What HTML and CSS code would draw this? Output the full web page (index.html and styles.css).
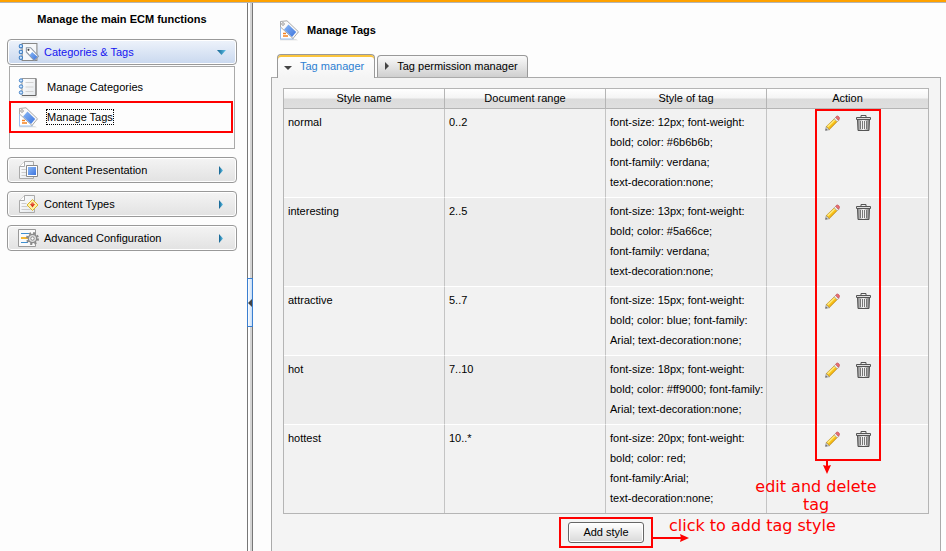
FILE: index.html
```
<!DOCTYPE html>
<html lang="en">
<head>
<meta charset="utf-8">
<title>Manage Tags</title>
<link rel="stylesheet" href="styles.css">
</head>
<body>
<svg class="defs" aria-hidden="true">
  <defs>
    <linearGradient id="blue" x1="0" y1="0" x2="1" y2="1"><stop offset="0" stop-color="#8ab8f5"/><stop offset="1" stop-color="#3d74dd"/></linearGradient>
    <linearGradient id="metal" x1="0" y1="0" x2="1" y2="0"><stop offset="0" stop-color="#8a8a8a"/><stop offset=".5" stop-color="#f4f4f4"/><stop offset="1" stop-color="#777"/></linearGradient>
    <linearGradient id="paper" x1="0" y1="0" x2="1" y2="1"><stop offset="0" stop-color="#fff"/><stop offset="1" stop-color="#e4e8ec"/></linearGradient>
    <linearGradient id="arrow" x1="0" y1="0" x2="1" y2="0"><stop offset="0" stop-color="#12608f"/><stop offset="1" stop-color="#5fc4ea"/></linearGradient>
  </defs>
  <symbol id="i-tag" viewBox="0 0 21 21">
    <path d="M1 20.200h18l-2-1H1z" fill="#d5d5d5"/>
    <path d="M1.500 1.500v17.500h13L10 10z" fill="#fff" stroke="#9cbfee"/>
    <path d="M4 13.500h3M4 16h5" stroke="#f58220" stroke-width="1.300"/>
    <path d="M1.500 1.500 8 .8l11.500 11-5.500 6.700L1.500 7z" fill="#fafafa" stroke="#a8a8a8"/>
    <path d="m9.500 4.500 7.700 7.500-4.200 5-8-7.500z" fill="url(#blue)"/>
    <circle cx="4" cy="4" r="1.300" fill="#fff" stroke="#888" stroke-width=".8"/>
  </symbol>
  <symbol id="i-notebook" viewBox="0 0 20 21">
    <path d="M2 20h17" stroke="#ddd"/>
    <path d="M3.500 1.500h14v17h-14z" fill="url(#paper)" stroke="#999"/>
    <path d="M17.500 1.500v17h-14" fill="none" stroke="#666"/>
    <path d="M7 5.500h8M7 10h8M7 14.500h8" stroke="#d2d2d2"/>
    <g fill="#cfe6ff" stroke="#3f7fc5"><circle cx="2.500" cy="3.500" r="1.700"/><circle cx="2.500" cy="9.500" r="1.700"/><circle cx="2.500" cy="15.500" r="1.700"/></g>
  </symbol>
  <symbol id="i-cattag" viewBox="0 0 20 18">
    <path d="M3.500.5h14v16h-14z" fill="#f5f7fa" stroke="#888"/>
    <g fill="#cfe6ff" stroke="#3f7fc5"><circle cx="2.300" cy="3" r="1.600"/><circle cx="2.300" cy="8.500" r="1.600"/><circle cx="2.300" cy="14" r="1.600"/></g>
    <path d="M7.500 4.500h4l7.500 8-4 4-7.500-8z" fill="#fff" stroke="#8b96a5"/>
    <path d="m13 8.500 5 4.500-3 3-4.500-4.500z" fill="url(#blue)"/>
    <circle cx="9.500" cy="6.500" r="1" fill="#444"/>
  </symbol>
  <symbol id="i-present" viewBox="0 0 20 19">
    <path d="M5.500.5h9v17h-14v-12z" fill="url(#paper)" stroke="#aaa"/>
    <path d="M5.500.5v5h-5" fill="#fff" stroke="#aaa"/>
    <path d="M2.500 8.500h5M2.500 11.500h5M2.500 14.500h5" stroke="#ccc"/>
    <path d="M7.500 4.500h11v11h-11z" fill="#fff" stroke="#8a8a8a"/>
    <path d="M9 6h8v8H9z" fill="url(#blue)"/>
  </symbol>
  <symbol id="i-types" viewBox="0 0 20 19">
    <path d="M5.500.5h10v17h-15v-12z" fill="url(#paper)" stroke="#aaa"/>
    <path d="M5.500.5v5h-5" fill="#fff" stroke="#aaa"/>
    <path d="M2.500 8.500h5M2.500 11.500h6M2.500 14.500h9" stroke="#ccc"/>
    <path d="m13.500 4.500 5.500 5.500-5.500 5.500L8 10z" fill="#fdf2a4" stroke="#dcb42c"/>
    <path d="M11 9h5l-2.500 3.500z" fill="#d8331d"/>
    <circle cx="13.500" cy="8.500" r="1.300" fill="#e8684c"/>
  </symbol>
  <symbol id="i-config" viewBox="0 0 22 19">
    <path d="M.5.500h17v17H.5z" fill="#fafafa" stroke="#999"/>
    <path d="M3 4.500h8" stroke="#3f8fd0"/><path d="M3 9h7" stroke="#f2b632" stroke-width="2"/><path d="M3 13.500h7" stroke="#3f8fd0"/>
    <circle cx="14.500" cy="9.500" r="5.500" fill="none" stroke="#8a8a8a" stroke-width="2" stroke-dasharray="2.160 2.160"/>
    <circle cx="14.500" cy="9.500" r="4.200" fill="#ddd" stroke="#8a8a8a" stroke-width="1.200"/>
    <circle cx="14.500" cy="9.500" r="1.700" fill="#fff" stroke="#888"/>
  </symbol>
  <symbol id="i-pencil" viewBox="0 0 15 16">
    <path d="M.6 15.400 1.300 11.500 4.500 14.600z" fill="#d9d9d9" stroke="#888" stroke-width=".7"/>
    <path d="M1.300 11.500 9.800 3.300l2.900 2.900-8.200 8.400z" fill="#f9c81c" stroke="#b58a2c" stroke-width=".6"/>
    <path d="m2.600 11.800 7.400-7.200" stroke="#ffec8b" stroke-width="1.200"/>
    <path d="m4.300 13.500 7.400-7.400" stroke="#e39b14" stroke-width=".8"/>
    <path d="m9.200 3.800 1.500-1.500 3 3-1.500 1.500z" fill="#f0f0f0" stroke="#999" stroke-width=".6"/>
    <path d="m10.700 2.300.9-1.100q.9-.6 2 .4 1.100 1 .8 2.200l-.9 1.500z" fill="#ee6f72" stroke="#b9494c" stroke-width=".7"/>
    <path d="m.4 15.600.5-2 1.500 1.400z" fill="#666"/>
  </symbol>
  <symbol id="i-trash" viewBox="0 0 15 16">
    <path d="M5 2V.5h5V2" fill="none" stroke="#555"/>
    <path d="M1.500 4.500h12l-.5 11H2z" fill="url(#metal)" stroke="#555"/>
    <path d="M.5 2.500h14v2H.5z" fill="#dedede" stroke="#555"/>
    <path d="M4.500 6v8M6.500 6v8M8.500 6v8M10.500 6v8" stroke="#777"/>
    <path d="M5.500 6v8M7.500 6v8M9.500 6v8" stroke="#f0f0f0"/>
  </symbol>
</svg>

<div class="topbar"></div>
<div class="workspace">
  <nav class="sidebar">
    <h2 class="sidebar-title">Manage the main ECM functions</h2>
    <div class="group">
      <button class="group-head is-open" type="button"><svg class="icon"><use href="#i-cattag"/></svg><span>Categories &amp; Tags</span><svg class="caret" viewBox="0 0 9 9"><path d="M0 2h9L4.500 7z" fill="url(#arrow)"/></svg></button>
      <ul class="group-list">
        <li><a href="#categories"><svg class="icon"><use href="#i-notebook"/></svg><span>Manage Categories</span></a></li>
        <li class="marked"><a href="#tags"><svg class="icon"><use href="#i-tag"/></svg><span class="focused">Manage Tags</span></a></li>
      </ul>
    </div>
    <button class="group-head" type="button"><svg class="icon"><use href="#i-present"/></svg><span>Content Presentation</span><svg class="caret" viewBox="0 0 9 9"><path d="M2 0v9l4-4.500z" fill="url(#arrow)"/></svg></button>
    <button class="group-head" type="button"><svg class="icon"><use href="#i-types"/></svg><span>Content Types</span><svg class="caret" viewBox="0 0 9 9"><path d="M2 0v9l4-4.500z" fill="url(#arrow)"/></svg></button>
    <button class="group-head" type="button"><svg class="icon"><use href="#i-config"/></svg><span>Advanced Configuration</span><svg class="caret" viewBox="0 0 9 9"><path d="M2 0v9l4-4.500z" fill="url(#arrow)"/></svg></button>
  </nav>
  <div class="splitter"><button class="splitter-handle" type="button" aria-label="Collapse"><svg viewBox="0 0 4 8"><path d="M4 0v8L0 4z" fill="#444"/></svg></button></div>
  <main class="main">
    <h1 class="page-title"><svg class="icon"><use href="#i-tag"/></svg>Manage Tags</h1>
    <div class="tabs">
      <button class="tab is-active" type="button"><svg viewBox="0 0 8 8"><path d="M0 2h8L4 6z" fill="#444"/></svg>Tag manager</button>
      <button class="tab" type="button"><svg viewBox="0 0 8 8"><path d="M2 0v8l4-4z" fill="#444"/></svg>Tag permission manager</button>
    </div>
    <section class="panel">
      <div class="table-wrap">
        <table class="styles">
          <thead><tr><th>Style name</th><th>Document range</th><th>Style of tag</th><th>Action</th></tr></thead>
          <tbody>
            <tr><td>normal</td><td>0..2</td><td class="css">font-size: 12px; font-weight:
bold; color: #6b6b6b;
font-family: verdana;
text-decoration:none;</td><td><div class="actions"><button type="button" aria-label="Edit"><svg><use href="#i-pencil"/></svg></button><button type="button" aria-label="Delete"><svg><use href="#i-trash"/></svg></button></div></td></tr>
            <tr><td>interesting</td><td>2..5</td><td class="css">font-size: 13px; font-weight:
bold; color: #5a66ce;
font-family: verdana;
text-decoration:none;</td><td><div class="actions"><button type="button" aria-label="Edit"><svg><use href="#i-pencil"/></svg></button><button type="button" aria-label="Delete"><svg><use href="#i-trash"/></svg></button></div></td></tr>
            <tr><td>attractive</td><td>5..7</td><td class="css">font-size: 15px; font-weight:
bold; color: blue; font-family:
Arial; text-decoration:none;</td><td><div class="actions"><button type="button" aria-label="Edit"><svg><use href="#i-pencil"/></svg></button><button type="button" aria-label="Delete"><svg><use href="#i-trash"/></svg></button></div></td></tr>
            <tr><td>hot</td><td>7..10</td><td class="css">font-size: 18px; font-weight:
bold; color: #ff9000; font-family:
Arial; text-decoration:none;</td><td><div class="actions"><button type="button" aria-label="Edit"><svg><use href="#i-pencil"/></svg></button><button type="button" aria-label="Delete"><svg><use href="#i-trash"/></svg></button></div></td></tr>
            <tr><td>hottest</td><td>10..*</td><td class="css">font-size: 20px; font-weight:
bold; color: red;
font-family:Arial;
text-decoration:none;</td><td><div class="actions"><button type="button" aria-label="Edit"><svg><use href="#i-pencil"/></svg></button><button type="button" aria-label="Delete"><svg><use href="#i-trash"/></svg></button></div></td></tr>
          </tbody>
        </table>
        <div class="callout-box"></div>
        <svg class="callout-down" viewBox="0 0 8 14"><path d="M4 0v8" stroke="red" stroke-width="2"/><path d="M0 5l4 1 4-1-4 9z" fill="red"/></svg>
        <p class="note note-actions">edit and delete tag</p>
      </div>
      <div class="footer">
        <div class="add-mark">
          <button class="add" type="button">Add style</button>
          <svg class="callout-right" viewBox="0 0 36 8"><path d="M0 4h30" stroke="red" stroke-width="2"/><path d="M27 0l1 4-1 4 9-4z" fill="red"/></svg>
          <p class="note note-add">click to add tag style</p>
        </div>
      </div>
    </section>
  </main>
</div>
</body>
</html>
```
FILE: styles.css
```
* { box-sizing: border-box; }
body {
  margin: 0;
  height: 100vh;
  overflow: hidden;
  display: flex;
  flex-direction: column;
  background: #fdfdfd;
  color: #000;
  font: 11px/20px "Liberation Sans", Arial, sans-serif;
}
button { font: inherit; color: inherit; padding: 0; cursor: pointer; }
h1, h2, p, ul { margin: 0; padding: 0; }
.defs { position: absolute; width: 0; height: 0; }
.topbar { flex: none; height: 3px; background: #ffa200; border-bottom: 1px solid #b5b5b5; }
.workspace { flex: 1; display: flex; min-height: 0; }

.sidebar { flex: none; width: 247px; padding: 6px 10px 0 7px; display: flex; flex-direction: column; gap: 8px; }
.sidebar-title { font-size: 11px; line-height: 20px; text-align: center; margin-bottom: 2px; }
.group-head {
  display: flex;
  align-items: center;
  width: 100%;
  height: 26px;
  padding: 0 10px;
  border: 1px solid #999;
  border-radius: 4px;
  background: linear-gradient(#f4f4f4, #e2e2e2);
  box-shadow: inset 0 0 0 1px #fff;
  text-align: left;
}
.group-head.is-open { background: linear-gradient(#eef3fb, #c9d8ef); color: #1414f0; }
.group-head .icon { width: 22px; height: 19px; margin-right: 4px; }
.group-head span { flex: 1; }
.caret { width: 9px; height: 9px; }
.group-list { list-style: none; margin: 1px 2px 0; height: 83px; padding-top: 6px; border: 1px solid #aaa; }
.group-list a { display: flex; align-items: center; height: 28px; padding-left: 8px; gap: 8px; color: #000; text-decoration: none; }
.group-list .icon { width: 21px; height: 21px; }
.marked { margin: 0 1px 0 -1px; border: 2px solid red; }
.marked a { padding-left: 7px; }
.focused { line-height: 14px; outline: 1px dotted #000; }

.splitter { flex: none; width: 6px; position: relative; background: linear-gradient(90deg, #777 0 1px, #fff 1px 3px, #d4d4d4 3px 5px, #777 5px); }
.splitter-handle { position: absolute; left: 0; top: 275px; width: 6px; height: 49px; border: 1px solid #3b7fd0; background: linear-gradient(90deg, #fff, #c5dcf6); display: flex; align-items: center; }
.splitter-handle svg { width: 4px; height: 8px; }

.main { flex: 1; min-width: 0; padding: 16px 5px 0 18px; display: flex; flex-direction: column; }
.page-title { display: flex; align-items: center; gap: 7px; height: 22px; padding-left: 8px; font-size: 11px; }
.page-title .icon { width: 21px; height: 21px; }
.tabs { display: flex; align-items: flex-end; gap: 2px; padding-left: 6px; margin-top: 13px; height: 24px; position: relative; z-index: 1; }
.tab {
  display: flex;
  align-items: center;
  gap: 6px;
  height: 22px;
  padding: 0 9px 2px 5px;
  margin-bottom: 1px;
  border: 1px solid #999;
  border-bottom: 0;
  border-radius: 4px 4px 0 0;
  background: linear-gradient(#fafafa, #cfcfcf);
}
.tab svg { width: 8px; height: 8px; }
.tab.is-active { height: 24px; margin-bottom: 0; padding: 0 10px 2px 6px; gap: 8px; background: linear-gradient(#fff, #f4f4f4); box-shadow: inset 0 2px #fbc53d; color: #2d7fd2; }
.tab.is-active svg { margin-top: 4px; }
.panel { flex: 1; margin-top: -1px; padding: 10px 11px 0; border: 1px solid #aaa; border-bottom: 0; background: #f4f4f4; }

.table-wrap { position: relative; }
.styles { width: 100%; table-layout: fixed; border-collapse: separate; border-spacing: 0; border: 1px solid #b5b5b5; background: #f2f2f2; }
.styles th { height: 20px; padding: 0; font-weight: normal; line-height: 19px; border-right: 1px solid #b5b5b5; border-bottom: 1px solid #b5b5b5; background: linear-gradient(#fff, #f5f5f5 45%, #dcdcdc 55%, #dfdfdf); }
.styles td { padding: 3px 4px 5px; vertical-align: top; border-right: 1px solid #c4c4c4; border-bottom: 1px solid #fff; }
.styles tr > :last-child { border-right: 0; }
.styles tbody tr:last-child td { border-bottom: 0; }
.styles tbody tr:nth-child(even) { background: #ededed; }
.css { white-space: pre; }
.actions { display: flex; justify-content: center; gap: 16px; padding-top: 3px; }
.actions button { width: 15px; height: 16px; border: 0; background: none; }
.actions svg { display: block; width: 15px; height: 16px; }

.callout-box { position: absolute; top: 21px; right: 48px; bottom: 53px; width: 66px; border: 2px solid red; pointer-events: none; }
.callout-down { position: absolute; right: 98px; bottom: 40px; width: 8px; height: 14px; }
.note { position: absolute; color: red; font: 16px/18px "DejaVu Sans", sans-serif; text-align: center; }
.note-actions { right: 47px; bottom: 0; width: 132px; }
.footer { display: flex; justify-content: center; padding-top: 3px; }
.add-mark { position: relative; padding: 3px 7px; border: 2px solid red; }
.add { display: block; width: 76px; height: 21px; border: 1px solid #666; border-radius: 3px; background: linear-gradient(#fff, #d9d9d9); box-shadow: inset 0 0 0 1px #fff; line-height: 19px; }
.callout-right { position: absolute; left: 92px; top: 15px; width: 36px; height: 8px; }
.note-add { left: 108px; top: -2px; white-space: nowrap; }
```
